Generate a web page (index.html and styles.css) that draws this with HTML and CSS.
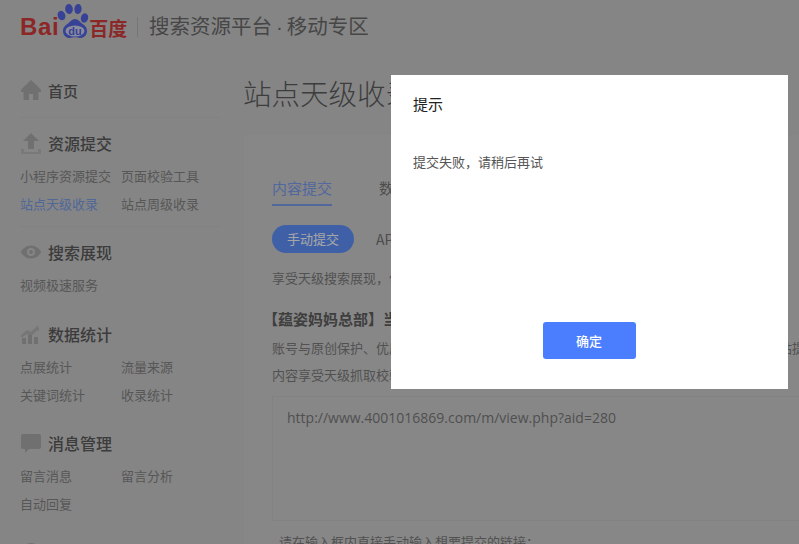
FILE: index.html
```html
<!DOCTYPE html>
<html lang="zh-CN">
<head>
<meta charset="utf-8">
<title>站点天级收录</title>
<link rel="stylesheet" href="styles.css">
</head>
<body>
<div class="page">
  <header class="topbar">
    <div class="logo">
      <span class="logo-bai">Bai</span>
      <svg class="logo-paw" viewBox="0 0 34 36" width="34" height="36" aria-hidden="true">
        <ellipse cx="5.500" cy="11.500" rx="3.800" ry="4.800" class="paw" transform="rotate(-18 5.500 11.500)"/>
        <ellipse cx="13" cy="5" rx="3.800" ry="5" class="paw" transform="rotate(-6 13 5)"/>
        <ellipse cx="22" cy="5" rx="3.600" ry="5" class="paw" transform="rotate(6 22 5)"/>
        <ellipse cx="28.500" cy="14" rx="3.600" ry="4.800" class="paw" transform="rotate(16 28.500 14)"/>
        <path d="M19 15c3 0 4.500 2.500 7 4.500 2.500 1.800 5 3.500 5 7.500 0 4.500-3.500 7-7 7-2 0-3.200-.7-5-.7s-3.200.7-5.500.7C10.500 34 7 31.500 7 27c0-4 2.800-5.700 5-7.500 2.500-2 4-4.500 7-4.500z" class="paw"/>
        <ellipse cx="19" cy="27" rx="9.500" ry="5.500" class="paw-inner"/>
        <text x="19" y="31" class="logo-du">du</text>
      </svg>
      <span class="logo-cn">百度</span>
    </div>
    <span class="topbar-sep"></span>
    <h1 class="topbar-title">搜索资源平台<span class="topbar-dot">·</span>移动专区</h1>
  </header>

  <div class="layout">
    <nav class="sidebar">
      <section class="nav-home">
        <h2 class="nav-title">
          <svg class="nav-icon" viewBox="0 0 22 22" aria-hidden="true"><path d="M11 1C8 4 4 7 1 11v2h2.500v8h5.500v-6h4v6h5.500v-8H21v-2C18 7 14 4 11 1z"/></svg>
          首页
        </h2>
      </section>

      <section class="nav-section nav-section-ruled">
        <h2 class="nav-title">
          <svg class="nav-icon" viewBox="0 0 22 22" aria-hidden="true"><path d="M11 1 3 9h5v8h6V9h5z"/><path d="M1 17h3v3h14v-3h3v5H1z" opacity=".6"/></svg>
          资源提交
        </h2>
        <ul class="nav-links">
          <li><a>小程序资源提交</a></li>
          <li><a>页面校验工具</a></li>
          <li><a class="is-current">站点天级收录</a></li>
          <li><a>站点周级收录</a></li>
        </ul>
      </section>

      <section class="nav-section nav-section-short">
        <h2 class="nav-title">
          <svg class="nav-icon" viewBox="0 0 22 22" aria-hidden="true"><path fill-rule="evenodd" d="M11 4.500C6 4.500 2.200 8 .8 11c1.400 3 5.200 6.500 10.200 6.500S19.800 14 21.200 11C19.800 8 16 4.500 11 4.500zM11 7a4 4 0 1 1 0 8 4 4 0 0 1 0-8z"/><circle cx="11" cy="11" r="2"/></svg>
          搜索展现
        </h2>
        <ul class="nav-links">
          <li><a>视频极速服务</a></li>
        </ul>
      </section>

      <section class="nav-section">
        <h2 class="nav-title">
          <svg class="nav-icon" viewBox="0 0 22 22" aria-hidden="true"><path d="M2 15h4v6H2zM8 12h4v9H8zM14 14h4v7h-4z"/><path d="M1 12 7 7l4 2 7-7v3l1-1v5l-1-2-7 6-4-2-6 4z" opacity=".7"/></svg>
          数据统计
        </h2>
        <ul class="nav-links">
          <li><a>点展统计</a></li>
          <li><a>流量来源</a></li>
          <li><a>关键词统计</a></li>
          <li><a>收录统计</a></li>
        </ul>
      </section>

      <section class="nav-section">
        <h2 class="nav-title">
          <svg class="nav-icon" viewBox="0 0 22 22" aria-hidden="true"><path d="M3 2h16a2 2 0 0 1 2 2v11a2 2 0 0 1-2 2H9l-4 4v-4H3a2 2 0 0 1-2-2V4a2 2 0 0 1 2-2z"/></svg>
          消息管理
        </h2>
        <ul class="nav-links">
          <li><a>留言消息</a></li>
          <li><a>留言分析</a></li>
          <li><a>自动回复</a></li>
        </ul>
      </section>

      <section class="nav-section">
        <h2 class="nav-title">
          <svg class="nav-icon" viewBox="0 0 22 22" aria-hidden="true"><circle cx="11" cy="11" r="9"/></svg>
          用户维护
        </h2>
      </section>
    </nav>

    <main class="main">
      <h1 class="page-title">站点天级收录</h1>
      <div class="card">
        <div class="tabs">
          <a class="tab is-active">内容提交</a>
          <a class="tab">数据反馈</a>
        </div>
        <div class="subtabs">
          <a class="pill">手动提交</a>
          <a class="subtab">API提交</a>
        </div>
        <p class="text text-intro">享受天级搜索展现，优质内容可通过此工具提交，获得更快的收录与展现。</p>
        <h3 class="site-line">【蕴姿妈妈总部】当前可用配额为零，请稍后再来查看与提交内容</h3>
        <p class="text">账号与原创保护、优质内容搜索展现等权益已经开通，可持续提交高质量原创内容的优质站提供更好的收录效果。</p>
        <p class="text">内容享受天级抓取校验与展现机会，请确保提交的页面内容真实有效。</p>
        <div class="urlbox">http://www.4001016869.com/m/view.php?aid=280</div>
        <p class="text hint"><span class="hint-mark">.</span>请在输入框内直接手动输入想要提交的链接：</p>
      </div>
    </main>
  </div>
</div>

<div class="mask"></div>
<div class="dialog" role="dialog">
  <h2 class="dialog-title">提示</h2>
  <p class="dialog-body">提交失败，请稍后再试</p>
  <div class="dialog-actions"><button class="dialog-btn" type="button">确定</button></div>
</div>
</body>
</html>
```
FILE: styles.css
```css
* { box-sizing: border-box; }
html, body { margin: 0; padding: 0; height: 100%; overflow: hidden; }
body {
  width: 799px;
  height: 544px;
  background: #cdcdcd;
  color: #7b7b7b;
  font-family: "Noto Sans CJK SC", "Noto Sans", sans-serif;
  position: relative;
}
h1, h2, h3, p, ul { margin: 0; padding: 0; font-weight: normal; }
ul { list-style: none; }

.page { width: 1100px; height: 544px; overflow: hidden; }

.topbar { height: 54px; display: flex; align-items: center; padding-left: 20px; }
.logo { display: flex; align-items: center; height: 54px; width: 108px; }
.logo-bai {
  font: bold 24px/1 "Liberation Sans", sans-serif;
  color: #d73c3c;
  letter-spacing: .6px;
}
.logo-paw { margin: -11px 0 0 -3px; flex: none; overflow: visible; }
.paw { fill: #5564e6; }
.paw-inner { fill: #d3d6f5; }
.logo-du { font: bold 11px "Liberation Sans", sans-serif; fill: #5564e6; text-anchor: middle; }
.logo-cn {
  font: bold 19px/1 "Noto Sans CJK SC", sans-serif;
  color: #d73c3c;
  margin-left: -1px;
  white-space: nowrap;
}
.topbar-sep { width: 1px; height: 20px; background: #b4b4b4; margin: 0 11px 0 9px; }
.topbar-title { font-size: 20.500px; line-height: 28px; padding-bottom: 2px; color: #6c6c6c; white-space: nowrap; }
.topbar-dot { font-family: "Liberation Sans", sans-serif; margin: 0 4px; }

.layout { display: flex; align-items: flex-start; }

.sidebar { flex: 0 0 244px; padding: 25px 24px 0 20px; }
.nav-home { padding-bottom: 14px; border-bottom: 1px solid #c6c6c6; }
.nav-section { padding: 14px 0 9px; }
.nav-section-ruled { border-bottom: 1px solid #c6c6c6; padding-bottom: 8px; }
.nav-section-short { padding-bottom: 10px; }
.nav-title {
  display: flex;
  align-items: center;
  height: 24px;
  padding-bottom: 2px;
  font-size: 16px;
  font-weight: 500;
  color: #5c5c5c;
  white-space: nowrap;
}
.nav-home .nav-title { font-size: 15px; }
.nav-icon { width: 22px; height: 22px; fill: #adadad; margin-right: 6px; flex: none; }
.nav-links { display: grid; grid-template-columns: 101px 1fr; margin-top: 6px; }
.nav-links li { height: 28px; line-height: 28px; font-size: 13px; color: #868686; white-space: nowrap; }
.nav-links .is-current { color: #7c9ee8; }

.main { flex: 0 0 856px; padding-top: 19px; }
.page-title { margin-left: -1px; font-size: 28.500px; line-height: 40px; color: #5e5e5e; font-weight: 300; white-space: nowrap; }
.card { margin-top: 22px; background: #d0d0d0; padding: 41px 28px 0; height: 500px; }
.tabs { display: flex; gap: 47px; }
.tab { font-size: 15px; line-height: 24px; height: 30px; color: #777; padding-bottom: 4px; }
.tab.is-active { color: #7e9ef0; border-bottom: 2px solid #7e9ef0; }
.subtabs { display: flex; align-items: center; gap: 22px; margin-top: 19px; height: 28px; }
.pill {
  width: 82px; height: 28px; border-radius: 14px;
  background: #6294ff; color: #fff;
  font-size: 13px; line-height: 28px; text-align: center;
}
.subtab { font-size: 14px; color: #777; }
.text { font-size: 13px; line-height: 27px; color: #7d7d7d; white-space: nowrap; }
.text-intro { margin-top: 11px; }
.site-line { margin: 16px 0 3px -9px; font-size: 15px; line-height: 24px; font-weight: 700; color: #606060; white-space: nowrap; }
.urlbox {
  margin-top: 8px;
  height: 125px;
  border: 1px solid #c8c8c8;
  padding: 11px 14px;
  font: 14px/20px "Open Sans", sans-serif;
  color: #7b7b7b;
}
.hint { margin-top: 7px; }
.hint-mark { display: inline-block; width: 7px; font-family: "Liberation Sans", sans-serif; }

.mask { position: absolute; inset: 0; background: rgba(0, 0, 0, .35); }
.dialog {
  position: absolute;
  left: 391px; top: 75px;
  width: 397px; height: 314px;
  background: #fff;
  padding: 19px 22px 30px;
  display: flex;
  flex-direction: column;
}
.dialog-title { font-size: 15px; line-height: 20px; color: #222; }
.dialog-body { margin-top: 38px; font-size: 13px; line-height: 20px; color: #555; }
.dialog-actions { margin-top: auto; padding-right: 1px; display: flex; justify-content: center; }
.dialog-btn {
  width: 93px; height: 37px;
  border: 0; border-radius: 3px;
  background: #4a7eff; color: #fff;
  font: 500 13px "Noto Sans CJK SC", sans-serif;
  padding: 0;
}
```
